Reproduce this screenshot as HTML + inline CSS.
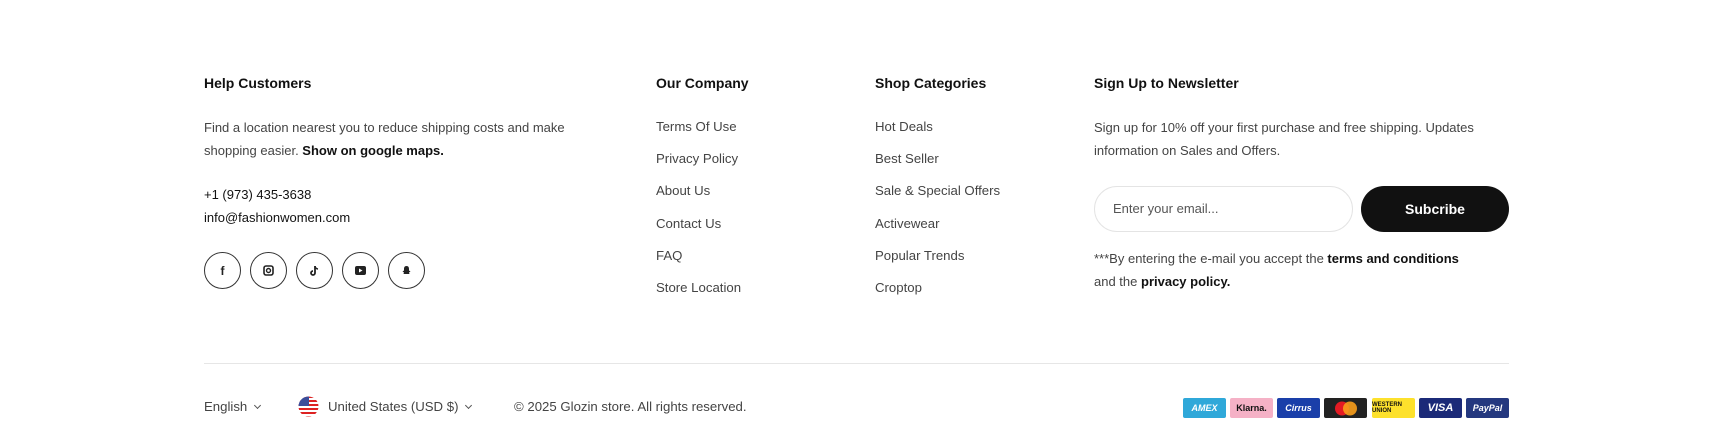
<!DOCTYPE html>
<html><head><meta charset="utf-8"><style>
*{margin:0;padding:0;box-sizing:border-box}
body{width:1713px;height:448px;background:#fff;font-family:"Liberation Sans",sans-serif;color:#444;position:relative;overflow:hidden}
.a{position:absolute}
h4{position:absolute;top:75px;font-size:14px;color:#111;font-weight:bold}
.t{font-size:13px;line-height:23px;color:#444}
.lk{position:absolute;font-size:13.2px;color:#444}
b{color:#111}
.soc{position:absolute;top:252px;width:37px;height:37px;border:1.2px solid #333;border-radius:50%;display:flex;align-items:center;justify-content:center;font-size:12px;color:#222;font-weight:bold}
.pay{position:absolute;top:398px;width:43px;height:20px;border-radius:2px;display:flex;align-items:center;justify-content:center;font-size:9px;font-weight:bold;font-style:italic;color:#fff}
.ch{display:inline-block;width:5px;height:5px;border-right:1.2px solid #555;border-bottom:1.2px solid #555;transform:rotate(45deg);margin-left:8px;position:relative;top:-3px}
</style></head><body>
<h4 style="left:204px">Help Customers</h4>
<div class="a t" style="left:204px;top:116px;width:400px">Find a location nearest you to reduce shipping costs and make shopping easier. <b>Show on google maps.</b></div>
<div class="a t" style="left:204px;top:183px;color:#111">+1 (973) 435-3638<br>info@fashionwomen.com</div>
<div class="soc" style="left:204px">f</div>
<div class="soc" style="left:250px"><svg width="11" height="11" viewBox="0 0 11 11"><rect x="1" y="1" width="9" height="9" rx="2" fill="none" stroke="#222" stroke-width="1.6"/><circle cx="5.5" cy="5.5" r="2" fill="none" stroke="#222" stroke-width="1.4"/></svg></div>
<div class="soc" style="left:296px"><svg width="11" height="12" viewBox="0 0 11 12"><path d="M6 1v7a2 2 0 1 1-2-2" fill="none" stroke="#222" stroke-width="1.8"/><path d="M6 1c0 1.5 1.2 2.8 3 3" fill="none" stroke="#222" stroke-width="1.6"/></svg></div>
<div class="soc" style="left:342px"><svg width="11" height="9"><rect width="11" height="9" rx="2" fill="#222"/><path d="M4 2.5L7.5 4.5 4 6.5z" fill="#fff"/></svg></div>
<div class="soc" style="left:388px"><svg width="11" height="11" viewBox="0 0 11 11"><path d="M5.5 1C3.5 1 3 2.5 3 4v1.5L1.5 6.5 3 7.5 2.5 9h6L8 7.5 9.5 6.5 8 5.5V4C8 2.5 7.5 1 5.5 1z" fill="#222"/></svg></div>

<h4 style="left:656px">Our Company</h4>
<div class="lk" style="left:656px;top:119px">Terms Of Use</div>
<div class="lk" style="left:656px;top:151px">Privacy Policy</div>
<div class="lk" style="left:656px;top:183px">About Us</div>
<div class="lk" style="left:656px;top:216px">Contact Us</div>
<div class="lk" style="left:656px;top:248px">FAQ</div>
<div class="lk" style="left:656px;top:280px">Store Location</div>

<h4 style="left:875px">Shop Categories</h4>
<div class="lk" style="left:875px;top:119px">Hot Deals</div>
<div class="lk" style="left:875px;top:151px">Best Seller</div>
<div class="lk" style="left:875px;top:183px">Sale &amp; Special Offers</div>
<div class="lk" style="left:875px;top:216px">Activewear</div>
<div class="lk" style="left:875px;top:248px">Popular Trends</div>
<div class="lk" style="left:875px;top:280px">Croptop</div>

<h4 style="left:1094px">Sign Up to Newsletter</h4>
<div class="a t" style="left:1094px;top:116px;width:420px">Sign up for 10% off your first purchase and free shipping. Updates information on Sales and Offers.</div>
<div class="a" style="left:1094px;top:186px;width:259px;height:46px;border:1px solid #e4e4e4;border-radius:23px;padding:14px 18px;font-size:13px;color:#555">Enter your email...</div>
<div class="a" style="left:1361px;top:186px;width:148px;height:46px;background:#111;border-radius:23px;color:#fff;font-size:14px;font-weight:bold;text-align:center;line-height:46px">Subcribe</div>
<div class="a t" style="left:1094px;top:247px;width:385px">***By entering the e-mail you accept the <b>terms and conditions</b> and the <b>privacy policy.</b></div>

<div class="a" style="left:204px;top:363px;width:1305px;height:1px;background:#e6e6e6"></div>
<div class="lk" style="left:204px;top:399px">English<span class="ch"></span></div>
<svg class="a" style="left:298px;top:396px" width="21" height="21" viewBox="0 0 21 21"><defs><clipPath id="c"><circle cx="10.5" cy="10.5" r="10"/></clipPath></defs><g clip-path="url(#c)"><rect width="21" height="21" fill="#fff"/><g fill="#d22"><rect y="0" width="21" height="2"/><rect y="4" width="21" height="2"/><rect y="8" width="21" height="2"/><rect y="12" width="21" height="2"/><rect y="16" width="21" height="2"/><rect y="20" width="21" height="2"/></g><rect width="11" height="10" fill="#3b4d9a"/></g></svg>
<div class="lk" style="left:328px;top:399px">United States (USD $)<span class="ch"></span></div>
<div class="lk" style="left:514px;top:399px">© 2025 Glozin store. All rights reserved.</div>

<div class="pay" style="left:1183px;background:#2fa8d9">AMEX</div>
<div class="pay" style="left:1230px;background:#f5b1c6;color:#111;font-style:normal">Klarna.</div>
<div class="pay" style="left:1277px;background:#1a3fa9">Cirrus</div>
<div class="pay" style="left:1324px;background:#222"><svg width="26" height="15"><circle cx="9" cy="7.5" r="7" fill="#e51b23"/><circle cx="17" cy="7.5" r="7" fill="#f99f1b" opacity=".9"/></svg></div>
<div class="pay" style="left:1372px;background:#fde12c;color:#111;font-size:6px;font-style:normal">WESTERN UNION</div>
<div class="pay" style="left:1419px;background:#1b2a78;font-size:11px">VISA</div>
<div class="pay" style="left:1466px;background:#24387f">PayPal</div>
</body></html>
